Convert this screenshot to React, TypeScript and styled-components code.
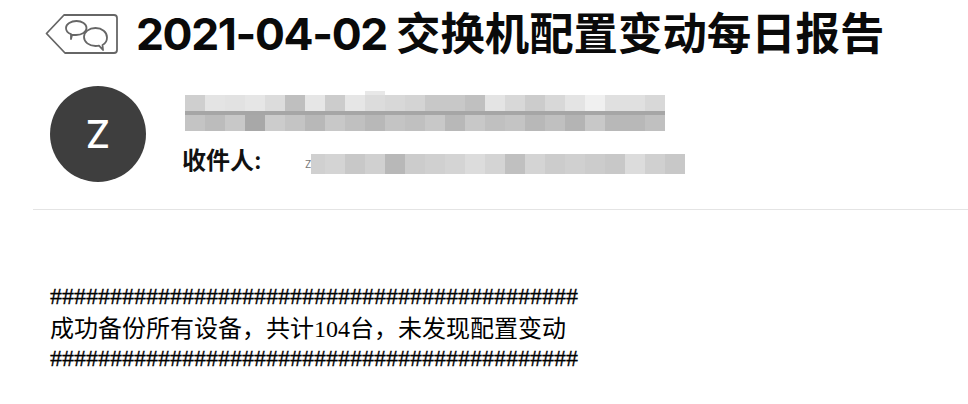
import React from "react";
import styled, { createGlobalStyle } from "styled-components";

const SENDER_TOP = ["#cfcfcf","#e4e4e4","#e2e2e2","#e6e6e6","#dcdcdc","#bfbfbf","#e6e6e6","#cccccc","#e6e6e6","#dcdcdc","#d8d8d8","#d4d4d4","#c8c8c8","#c8c8c8","#c0c0c0","#e4e4e4","#d8d8d8","#cccccc","#d8d8d8","#e4e4e4","#f0f0f0","#e0e0e0","#e0e0e0","#d8d8d8"];
const SENDER_BOTTOM = ["#c4c4c4","#bcbcbc","#c8c8c8","#a8a8a8","#cccccc","#c4c4c4","#b8b8b8","#c8c8c8","#c0c0c0","#b8b8b8","#c4c4c4","#c0c0c0","#c8c8c8","#b8b8b8","#c8c8c8","#c0c0c0","#c4c4c4","#b8b8b8","#c0c0c0","#b4b4b4","#c8c8c8","#b8b8b8","#b8b8b8","#c0c0c0"];
const RECEIVER = ["#d0d0d0","#d4d4d4","#c8c8c8","#d0d0d0","#b8b8b8","#cccccc","#d0d0d0","#d4d4d4","#dcdcdc","#d4d4d4","#c0c0c0","#d4d4d4","#cccccc","#d0d0d0","#cccccc","#c8c8c8","#dcdcdc","#d0d0d0","#c8c8c8"];

const GlobalStyle = createGlobalStyle`
  html, body {
    margin: 0;
    padding: 0;
    background: #fff;
  }
`;

const Page = styled.div`
  width: 968px;
  height: 404px;
  overflow: hidden;
  background: #fff;
  font-family: "Inter", "Noto Sans CJK SC", sans-serif;
`;

const TitleRow = styled.header`
  display: flex;
  align-items: center;
  gap: 17px;
  height: 68px;
  padding-left: 45px;
`;

const Title = styled.h1`
  margin: 0;
  font-size: 44.4px;
  font-weight: 700;
  line-height: 68px;
  color: #0a0a0a;
  white-space: nowrap;
`;

const TitleDate = styled.span`
  letter-spacing: -1.35px;
`;

const MetaRow = styled.section`
  display: flex;
  gap: 39px;
  padding: 18px 0 27px 50px;
`;

const Avatar = styled.div`
  width: 96px;
  height: 96px;
  border-radius: 50%;
  background: #3e3e3e;
  color: #fff;
  font-size: 38px;
  font-weight: 500;
  line-height: 96px;
  text-align: center;
`;

const Meta = styled.div`
  display: flex;
  flex-direction: column;
  gap: 20px;
  padding-top: 9px;
`;

const Mosaic = styled.div`
  display: flex;
  filter: blur(0.5px);
`;

const SenderCell = styled.div<{ $top: string; $bottom: string; $bump?: boolean }>`
  width: 20px;
  height: 36px;
  background: linear-gradient(
    ${(p) => p.$top} 0 16px,
    #a6a6a6 16px 20px,
    ${(p) => p.$bottom} 20px 36px
  );
  box-shadow: ${(p) => (p.$bump ? "0 -4px 0 #e8e8e8" : "none")};
`;

const ReceiverRow = styled.div`
  display: flex;
  align-items: center;
  margin-left: -3px;
`;

const Label = styled.span`
  width: 123px;
  margin-bottom: 5px;
  font-size: 24px;
  font-weight: 600;
  line-height: 20px;
  color: #111;
`;

const ReceiverStub = styled.span`
  width: 6px;
  font-size: 10px;
  line-height: 20px;
  color: #777;
`;

const ReceiverCell = styled.div<{ $color: string; $narrow?: boolean }>`
  width: ${(p) => (p.$narrow ? "14px" : "20px")};
  height: 20px;
  background: ${(p) => p.$color};
`;

const Divider = styled.hr`
  margin: 0 0 0 33px;
  border: 0;
  border-top: 1px solid #e4e4e4;
`;

const Body = styled.main`
  padding: 71px 0 0 50px;
  font-family: "Liberation Serif", "Noto Sans CJK SC", serif;
  font-size: 24px;
  line-height: 31px;
  color: #000;
`;

const HashLine = styled.div`
  white-space: nowrap;
  -webkit-text-stroke: 0.3px #000;
`;

const Sentence = styled.div`
  margin: 4px 0 0;
  line-height: 27px;
  white-space: nowrap;
`;

const TagIcon = () => (
  <svg width="74" height="42" viewBox="0 0 74 42" fill="none" stroke="#666" strokeWidth="1.8">
    <path d="M1.500 20.500 19 2H69a3 3 0 0 1 3 3v32a3 3 0 0 1-3 3H20Z" strokeLinejoin="round" />
    <path d="M26 26l1-4h4c6 0 10.500-3 10.500-7S37 8 31.500 8 21 11 21 15c0 2.800 1.800 5 5 6.200Z" strokeLinejoin="round" />
    <path
      d="M58 37l-0.500-5c3-1.500 4.500-4 4.500-7.500C62 19 57 15 50.500 15S39 19 39 24s5 9 11.500 9c1.500 0 2.500 0 3.500-0.300Z"
      fill="#fff"
      strokeLinejoin="round"
    />
  </svg>
);

const hashes = "#".repeat(44);

export default function App() {
  return (
    <Page>
      <GlobalStyle />
      <TitleRow>
        <TagIcon />
        <Title>
          <TitleDate>2021-04-02 </TitleDate>交换机配置变动每日报告
        </Title>
      </TitleRow>
      <MetaRow>
        <Avatar>Z</Avatar>
        <Meta>
          <Mosaic>
            {SENDER_TOP.map((top, i) => (
              <SenderCell key={i} $top={top} $bottom={SENDER_BOTTOM[i]} $bump={i === 9} />
            ))}
          </Mosaic>
          <ReceiverRow>
            <Label>收件人:</Label>
            <ReceiverStub>Z</ReceiverStub>
            <Mosaic>
              {RECEIVER.map((c, i) => (
                <ReceiverCell key={i} $color={c} $narrow={i === 0} />
              ))}
            </Mosaic>
          </ReceiverRow>
        </Meta>
      </MetaRow>
      <Divider />
      <Body>
        <HashLine>{hashes}</HashLine>
        <Sentence>成功备份所有设备，共计104台，未发现配置变动</Sentence>
        <HashLine>{hashes}</HashLine>
      </Body>
    </Page>
  );
}
